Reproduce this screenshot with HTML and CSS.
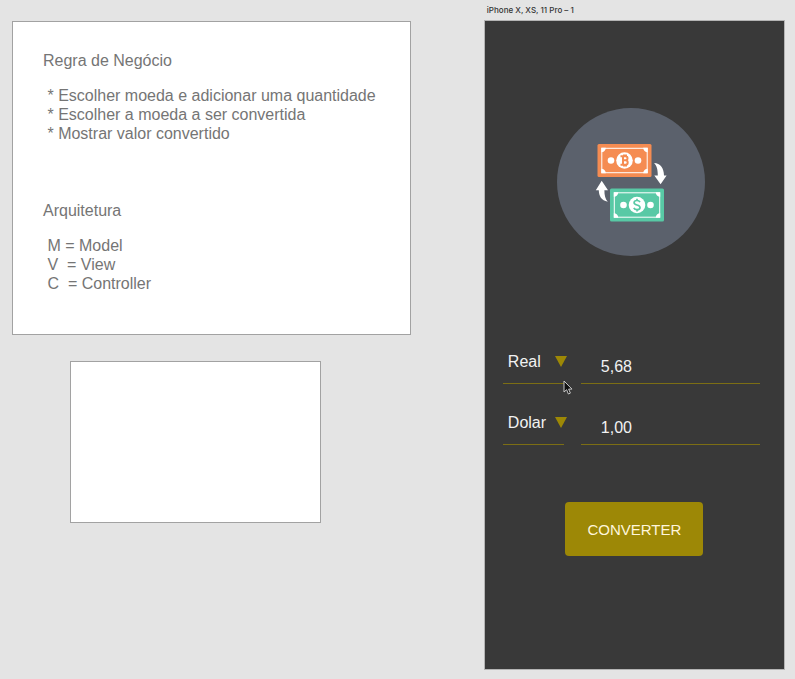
FILE: index.html
```html
<!DOCTYPE html>
<html lang="pt-BR">
<head>
<meta charset="utf-8">
<meta name="viewport" content="width=device-width, initial-scale=1">
<title>Conversor de moedas</title>
<link rel="stylesheet" href="styles.css">
</head>
<body>
<main class="canvas">
  <div class="notes">
    <section class="note">
      <h2 class="note-title">Regra de Negócio</h2>
      <ul class="note-list">
        <li> * Escolher moeda e adicionar uma quantidade</li>
        <li> * Escolher a moeda a ser convertida</li>
        <li> * Mostrar valor convertido</li>
      </ul>
      <h2 class="note-title">Arquitetura</h2>
      <ul class="note-list">
        <li> M = Model</li>
        <li> V  = View</li>
        <li> C  = Controller</li>
      </ul>
    </section>
    <div class="blank"></div>
  </div>

  <section class="artboard">
    <h1 class="artboard-name">iPhone X, XS, 11 Pro – 1</h1>
    <form class="phone">
      <div class="body">
        <svg class="logo" viewBox="0 0 148 148" aria-hidden="true">
          <circle cx="74" cy="74" r="74" fill="#5b616c"/>
          <g>
            <rect x="40.500" y="36" width="54" height="33" rx="1.500" fill="#f58c52"/>
            <rect x="44.800" y="40.300" width="45.400" height="24.400" fill="none" stroke="#fff" stroke-width="1"/>
            <path fill="#fff" d="M44.300 39.800h4.500a4.500 4.500 0 0 1-4.500 4.500zM90.700 39.800v4.500a4.500 4.500 0 0 1-4.500-4.500zM44.300 65.200v-4.500a4.500 4.500 0 0 1 4.500 4.500zM90.700 65.200h-4.500a4.500 4.500 0 0 1 4.500-4.500z"/>
            <circle cx="67.500" cy="52.500" r="8.300" fill="#fff"/>
            <circle cx="54" cy="52.500" r="3.300" fill="#fff"/>
            <circle cx="81" cy="52.500" r="3.300" fill="#fff"/>
            <path d="M63.500 48.300h5a2 2 0 0 1 0 4H66m2.500 0a2.200 2.200 0 0 1 0 4.400h-5M66 48.300v8.400M67 46.600v1.700M69 46.600v1.700M67 56.700v1.700M69 56.700v1.700" fill="none" stroke="#f58c52" stroke-width="2"/>
          </g>
          <g>
            <rect x="53" y="80.500" width="54" height="33" rx="1.500" fill="#58c9a5"/>
            <rect x="57.300" y="84.800" width="45.400" height="24.400" fill="none" stroke="#fff" stroke-width="1"/>
            <path fill="#fff" d="M56.800 84.300h4.500a4.500 4.500 0 0 1-4.500 4.500zM103.200 84.300v4.500a4.500 4.500 0 0 1-4.500-4.500zM56.800 109.700v-4.500a4.500 4.500 0 0 1 4.500 4.500zM103.200 109.700h-4.500a4.500 4.500 0 0 1 4.500-4.500z"/>
            <circle cx="80" cy="97" r="8.300" fill="#fff"/>
            <circle cx="66.500" cy="97" r="3.300" fill="#fff"/>
            <circle cx="93.500" cy="97" r="3.300" fill="#fff"/>
            <path d="M83 94.200c-.7-1.300-1.700-1.700-3-1.700-1.800 0-2.900.9-2.900 2.200 0 3 5.900 1.500 5.900 4.700 0 1.400-1.200 2.300-3 2.300-1.500 0-2.600-.6-3.200-1.900M80 90.700v1.800M80 101.700v1.800" fill="none" stroke="#58c9a5" stroke-width="1.700"/>
          </g>
          <path fill="#fff" d="M97 55c6.300.3 9.900 5 10 12.500h2.600l-6 8.800-6.300-8.800h3.500c0-6-1-9.900-3.800-12.500z"/>
          <path fill="#fff" d="M50.800 93.700c-6.500-1.300-8.900-5.700-9-11.500h-3l5.900-9.500 6.300 9.500h-3.600c0 5 .8 8.600 3.400 11.500z"/>
        </svg>

        <div class="rows">
          <div class="row">
            <div class="currency">
              <select aria-label="Moeda de origem"><option>Real</option><option>Dolar</option></select>
              <svg class="arrow" viewBox="0 0 12 11" aria-hidden="true"><path d="M0 0h12L6 11z"/></svg>
            </div>
            <input class="amount" type="text" value="5,68" aria-label="Valor de origem">
            <svg class="pointer" viewBox="0 0 10 15" aria-hidden="true"><path d="M1 1v11l2.600-2.300L5.400 14l2-.9-1.800-4H9z" fill="#111" stroke="#c8c8c8" stroke-width="1"/></svg>
          </div>
          <div class="row">
            <div class="currency">
              <select aria-label="Moeda de destino"><option>Dolar</option><option>Real</option></select>
              <svg class="arrow" viewBox="0 0 12 11" aria-hidden="true"><path d="M0 0h12L6 11z"/></svg>
            </div>
            <input class="amount" type="text" value="1,00" aria-label="Valor de destino">
          </div>
        </div>
      </div>
      <button class="convert" type="button">CONVERTER</button>
    </form>
  </section>
</main>
</body>
</html>
```
FILE: styles.css
```css
* {
  box-sizing: border-box;
}

body {
  margin: 0;
  background: #e4e4e4;
  color: #757575;
  font: 16px/19px "Liberation Sans", Arial, sans-serif;
}

.canvas {
  display: grid;
  grid-template-columns: minmax(0, 4fr) minmax(0, 3fr);
  gap: 74px;
  min-height: 100vh;
  padding: 0 11px 10px 12px;
}

.notes {
  padding-top: 21px;
}

.note,
.blank {
  background: #fff;
  border: 1px solid #a2a2a2;
}

.note {
  padding: 29px 30px 41px;
}

.note-title {
  margin: 0 0 16px;
  font-size: 16px;
  font-weight: 400;
}

.note-list {
  margin: 0;
  padding: 0;
  list-style: none;
}

.note-list li {
  white-space: pre-wrap;
}

.note-list + .note-title {
  margin-top: 58px;
}

.blank {
  width: 63%;
  margin: 26px 0 0 58px;
  aspect-ratio: 251 / 162;
}

.artboard {
  display: flex;
  flex-direction: column;
}

.artboard-name {
  margin: 0;
  padding-left: 2px;
  color: #333;
  font: 500 8px/21px Inter, sans-serif;
}

.phone {
  flex: 1;
  padding: 87px 0 32px;
  background: #393939;
  outline: 1px solid #b4b4b4;
}

.body {
  padding: 0 24px 0 18px;
}

.logo {
  display: block;
  width: 148px;
  margin: 0 auto 84px;
}

.rows {
  display: grid;
  gap: 17px;
}

.row {
  position: relative;
  display: flex;
  gap: 17px;
}

.currency {
  position: relative;
  width: 61px;
}

select,
.amount {
  width: 100%;
  height: 44px;
  margin: 0;
  border: 0;
  border-bottom: 1px solid #7c6e14;
  border-radius: 0;
  background: transparent;
  color: #f2f2f2;
  font: inherit;
  appearance: none;
}

select {
  padding: 0 0 0 5px;
}

.amount {
  flex: 1;
  min-width: 0;
  padding: 10px 0 0 20px;
}

.arrow {
  position: absolute;
  top: 16px;
  right: -3px;
  width: 12px;
  fill: #9d8806;
  pointer-events: none;
}

.pointer {
  position: absolute;
  top: 40px;
  left: 60px;
  width: 10px;
  pointer-events: none;
}

.convert {
  display: block;
  width: 138px;
  height: 54px;
  margin: 57px auto 0;
  padding: 0;
  border: 0;
  border-radius: 4px;
  background: #9d8806;
  color: #fff6dc;
  font: inherit;
  font-size: 15px;
}
```
